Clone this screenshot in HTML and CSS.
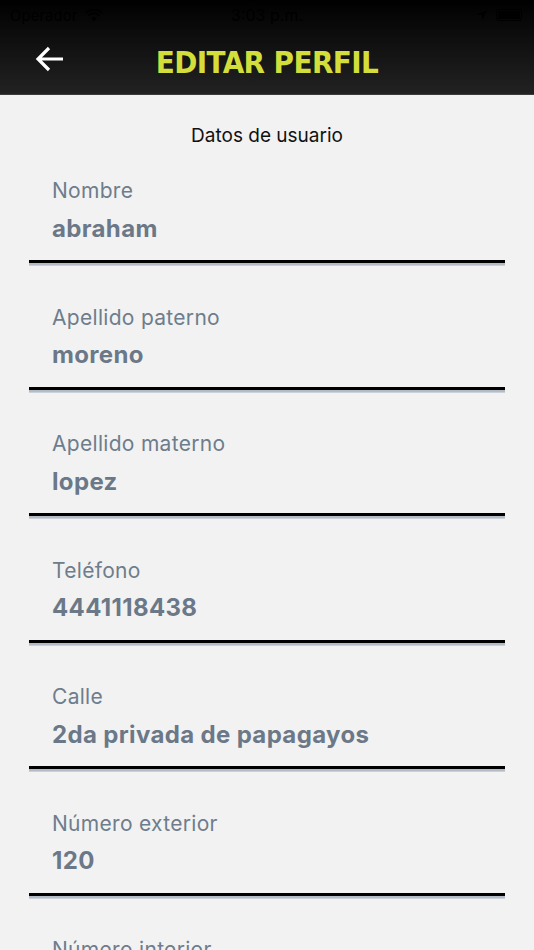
FILE: index.html
```html
<!DOCTYPE html>
<html lang="es">
<head>
<meta charset="utf-8">
<title>Editar perfil</title>
<link rel="stylesheet" href="styles.css">
</head>
<body>
<header class="topbar">
  <div class="status">
    <div class="status-left">
      <span>Operador</span>
      <svg class="wifi" width="18" height="13" viewBox="0 0 18 13"><path d="M9 12.5 L6.2 9.3 A4 4 0 0 1 11.8 9.3 Z" fill="#000"/><path d="M3.6 6.6 A7.6 7.6 0 0 1 14.4 6.6" stroke="#000" stroke-width="2" fill="none"/><path d="M1 3.8 A11.3 11.3 0 0 1 17 3.8" stroke="#000" stroke-width="2" fill="none"/></svg>
    </div>
    <span class="status-time">3:03 p.m.</span>
    <div class="status-right">
      <svg width="12" height="12" viewBox="0 0 12 12"><path d="M11 1 L1 5.5 L6 6 L6.5 11 Z" fill="#000"/></svg>
      <span class="battery"><span class="battery-fill"></span></span>
    </div>
  </div>
  <nav class="navbar">
    <button class="back" aria-label="Volver">
      <svg width="30" height="28" viewBox="0 0 30 28"><path d="M28 14 H3 M14 3 L3 14 L14 25" stroke="#fff" stroke-width="3.2" fill="none" stroke-linecap="butt" stroke-linejoin="miter"/></svg>
    </button>
    <h1 class="title">EDITAR PERFIL</h1>
  </nav>
</header>
<main class="content">
  <h2 class="section-title">Datos de usuario</h2>
  <div class="fields">
    <div class="field"><div class="label">Nombre</div><div class="value">abraham</div></div>
    <div class="field"><div class="label">Apellido paterno</div><div class="value">moreno</div></div>
    <div class="field"><div class="label">Apellido materno</div><div class="value">lopez</div></div>
    <div class="field"><div class="label">Teléfono</div><div class="value">4441118438</div></div>
    <div class="field"><div class="label">Calle</div><div class="value">2da privada de papagayos</div></div>
    <div class="field"><div class="label">Número exterior</div><div class="value">120</div></div>
    <div class="field"><div class="label">Número interior</div><div class="value">&nbsp;</div></div>
  </div>
</main>
</body>
</html>
```
FILE: styles.css
```css
* { box-sizing: border-box; }
html, body { margin: 0; padding: 0; }
body {
  background: #f2f2f2;
  font-family: Inter, "Noto Sans", sans-serif;
  width: 534px;
  height: 950px;
  overflow: hidden;
}
.topbar {
  background: linear-gradient(#000 0%, #0e0e0e 40%, #222 100%);
  height: 95px;
  border-bottom: 1px solid #3c3c3c;
}
.status {
  height: 30px;
  display: flex;
  align-items: center;
  justify-content: space-between;
  padding: 0 12px 0 10px;
  color: #000;
  font-size: 15px;
  position: relative;
}
.status-left { display: flex; align-items: center; gap: 8px; }
.status-time {
  position: absolute;
  left: 0; right: 0;
  text-align: center;
  font-size: 16px;
}
.status-right { display: flex; align-items: center; gap: 8px; }
.battery {
  width: 26px; height: 12px;
  border: 1px solid #000;
  border-radius: 3px;
  padding: 1px;
  display: flex;
}
.battery-fill { flex: 1; background: #000; border-radius: 1px; }
.navbar {
  height: 64px;
  display: flex;
  align-items: center;
  position: relative;
}
.back {
  background: none;
  border: 0;
  padding: 0;
  margin-left: 35px;
  margin-top: -6px;
  width: 30px;
  height: 28px;
  display: flex;
}
.title {
  position: absolute;
  left: 0; right: 0;
  top: 14px;
  margin: 0;
  text-align: center;
  font-family: "DejaVu Sans", sans-serif;
  font-stretch: condensed;
  font-weight: 700;
  font-size: 31px;
  line-height: 36px;
  letter-spacing: -0.6px;
  color: #d3de3b;
  pointer-events: none;
}
.content { padding: 0; }
.section-title {
  margin: 0;
  height: 44px;
  padding-top: 29px;
  text-align: center;
  font-weight: 400;
  font-size: 19px;
  line-height: 24px;
  color: #111;
}
.fields { margin: 0 29px; }
.field {
  padding: 40px 0 17.4px 23px;
  border-bottom: 3px solid #000;
  box-shadow: 0 2.6px 0 #b3bcc6;
  margin-bottom: 2.6px;
}
.label {
  font-size: 21px;
  line-height: 24px;
  letter-spacing: 0.3px;
  color: #6e7d8c;
}
.value {
  margin-top: 11.6px;
  font-size: 24px;
  font-weight: 700;
  line-height: 28px;
  letter-spacing: 0.35px;
  color: #6b7888;
}
```
